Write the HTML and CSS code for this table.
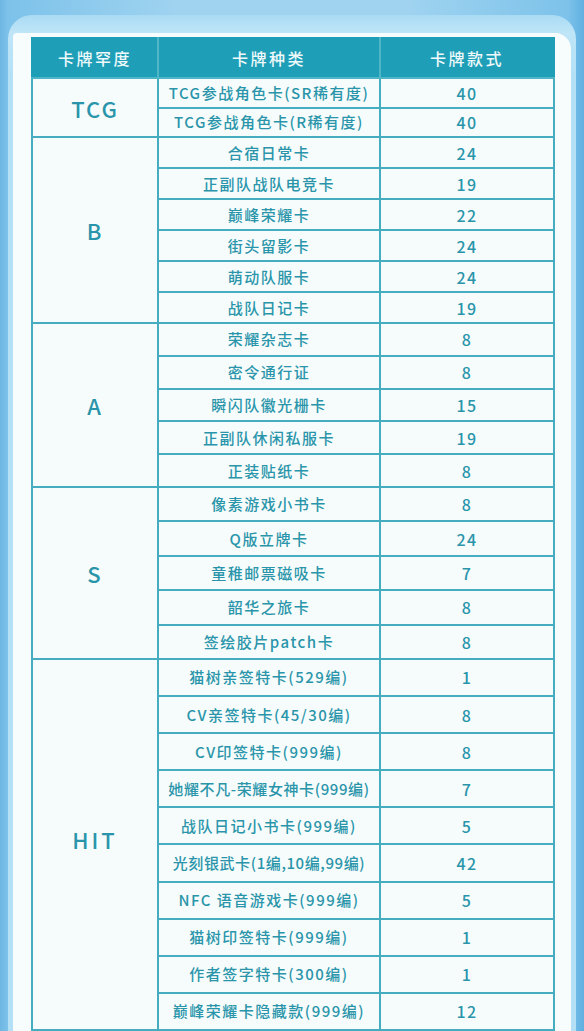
FILE: index.html
```html
<!DOCTYPE html>
<html lang="zh-CN">
<head>
<meta charset="utf-8">
<title>卡牌罕度</title>
<link rel="stylesheet" href="styles.css">
</head>
<body>
<div class="frame">
  <div class="panel">
    <table class="cards">
      <colgroup>
        <col class="c1"><col class="c2"><col class="c3">
      </colgroup>
      <thead>
        <tr class="r-head"><th>卡牌罕度</th><th>卡牌种类</th><th>卡牌款式</th></tr>
      </thead>
      <tbody>
        <tr class="r-tcg"><td class="cat" rowspan="2">TCG</td><td>TCG参战角色卡(SR稀有度)</td><td class="num">40</td></tr>
        <tr class="r-tcg"><td>TCG参战角色卡(R稀有度)</td><td class="num">40</td></tr>

        <tr class="r-b"><td class="cat" rowspan="6">B</td><td>合宿日常卡</td><td class="num">24</td></tr>
        <tr class="r-b"><td>正副队战队电竞卡</td><td class="num">19</td></tr>
        <tr class="r-b"><td>巅峰荣耀卡</td><td class="num">22</td></tr>
        <tr class="r-b"><td>街头留影卡</td><td class="num">24</td></tr>
        <tr class="r-b"><td>萌动队服卡</td><td class="num">24</td></tr>
        <tr class="r-b"><td>战队日记卡</td><td class="num">19</td></tr>

        <tr class="r-a"><td class="cat" rowspan="5">A</td><td>荣耀杂志卡</td><td class="num">8</td></tr>
        <tr class="r-a"><td>密令通行证</td><td class="num">8</td></tr>
        <tr class="r-a"><td>瞬闪队徽光栅卡</td><td class="num">15</td></tr>
        <tr class="r-a"><td>正副队休闲私服卡</td><td class="num">19</td></tr>
        <tr class="r-a"><td>正装贴纸卡</td><td class="num">8</td></tr>

        <tr class="r-s"><td class="cat" rowspan="5">S</td><td>像素游戏小书卡</td><td class="num">8</td></tr>
        <tr class="r-s"><td>Q版立牌卡</td><td class="num">24</td></tr>
        <tr class="r-s"><td>童稚邮票磁吸卡</td><td class="num">7</td></tr>
        <tr class="r-s"><td>韶华之旅卡</td><td class="num">8</td></tr>
        <tr class="r-s"><td>签绘胶片patch卡</td><td class="num">8</td></tr>

        <tr class="r-hit"><td class="cat cat-hit" rowspan="10">HIT</td><td>猫树亲签特卡(529编)</td><td class="num">1</td></tr>
        <tr class="r-hit"><td>CV亲签特卡(45/30编)</td><td class="num">8</td></tr>
        <tr class="r-hit"><td>CV印签特卡(999编)</td><td class="num">8</td></tr>
        <tr class="r-hit"><td class="tight">她耀不凡-荣耀女神卡(999编)</td><td class="num">7</td></tr>
        <tr class="r-hit"><td>战队日记小书卡(999编)</td><td class="num">5</td></tr>
        <tr class="r-hit"><td class="tight">光刻银武卡(1编,10编,99编)</td><td class="num">42</td></tr>
        <tr class="r-hit"><td>NFC 语音游戏卡(999编)</td><td class="num">5</td></tr>
        <tr class="r-hit"><td>猫树印签特卡(999编)</td><td class="num">1</td></tr>
        <tr class="r-hit"><td>作者签字特卡(300编)</td><td class="num">1</td></tr>
        <tr class="r-hit"><td>巅峰荣耀卡隐藏款(999编)</td><td class="num">12</td></tr>
      </tbody>
    </table>
  </div>
</div>
</body>
</html>
```

FILE: styles.css
```css
html, body {
  margin: 0;
  padding: 0;
}

body {
  width: 584px;
  height: 1031px;
  overflow: hidden;
  background: linear-gradient(90deg, #6db7e3 0px, #7dc2ea 8px, #9fd3f0 30%, #9fd3f0 70%, #7dc2ea 568px, #5fb0e0 584px);
  font-family: "Noto Sans CJK SC", "Noto Sans", sans-serif;
}

.frame {
  box-sizing: border-box;
  height: 1016px;
  margin: 15px 8px 0 8px;
  padding: 18px 5px 0 5px;
  background: linear-gradient(180deg, #a9dbf4 0px, #bfe5f7 18px, #b4e0f6 60px);
  border-radius: 24px 24px 0 0;
}

.panel {
  box-sizing: border-box;
  height: 100%;
  padding: 4px 18px 0 18px;
  background: #f7fcfd;
  border-radius: 4px 16px 0 0;
  overflow: hidden;
}

.cards {
  width: 522px;
  table-layout: fixed;
  border-collapse: collapse;
  background: #f6fcfc;
  color: #2a95aa;
  border: 2px solid #3aa8bb;
}

.c1 { width: 126px; }
.c2 { width: 222px; }
.c3 { width: 174px; }

.cards th,
.cards td {
  border: 2px solid #45adbf;
  padding: 0;
  text-align: center;
  vertical-align: middle;
  white-space: nowrap;
  overflow: visible;
}

.cards th {
  background: #1e9fb7;
  color: #eef9fb;
  font-weight: 500;
  font-size: 16px;
  letter-spacing: 2.5px;
  border-color: #4fb6c8;
  border-top-color: #1e9fb7;
}

.cards th:first-child { border-left-color: #1e9fb7; }
.cards th:last-child { border-right-color: #1e9fb7; }

.cards td {
  font-size: 15px;
  font-weight: 500;
  letter-spacing: 1.5px;
  line-height: 18px;
}

.cards td.tight {
  letter-spacing: 0.6px;
}

.cards td.num {
  font-size: 16px;
  letter-spacing: 1.5px;
}

.cards td.cat {
  font-size: 22px;
  font-weight: 500;
  letter-spacing: 2px;
}

.cards td.cat-hit {
  letter-spacing: 3px;
  padding-bottom: 10px;
}

.r-head { height: 40px; }
.r-tcg { height: 29.5px; }
.r-b { height: 31px; }
.r-a { height: 32.8px; }
.r-s { height: 34.4px; }
.r-hit { height: 37.1px; }
```
